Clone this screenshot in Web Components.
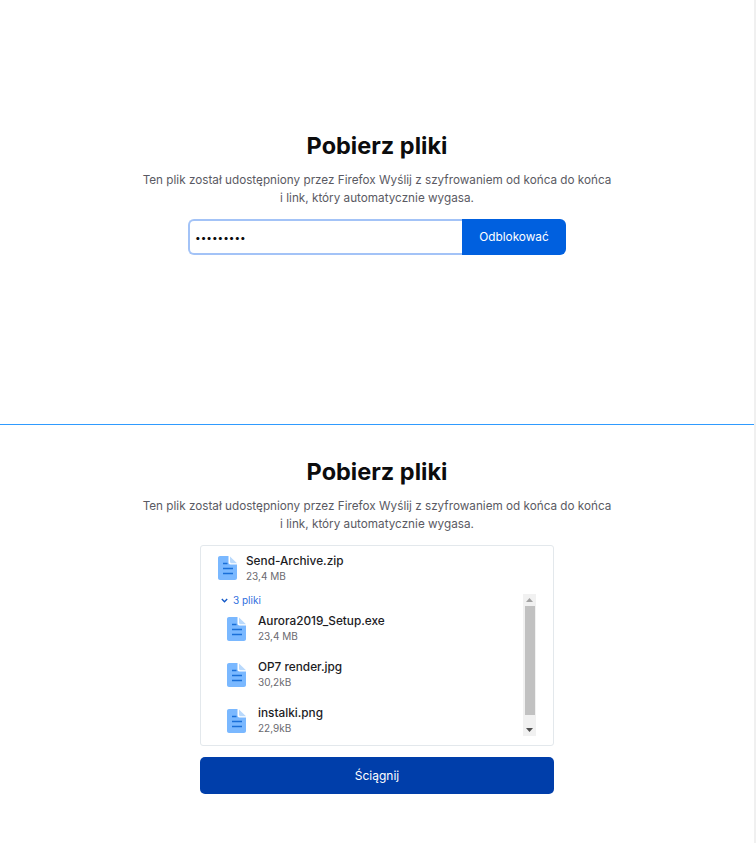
<!DOCTYPE html>
<html lang="pl">
<head>
<meta charset="utf-8">
<title>Pobierz pliki</title>
<style>
    html, body { margin: 0; background: #fff; }
    body { font-family: Inter, "Liberation Sans", sans-serif; color: #0c0c0d; }
</style>
</head>
<body>
<send-page>
    <send-panel slot="top">
        <unlock-form></unlock-form>
    </send-panel>
    <send-panel slot="bottom">
        <file-card>
            <file-row name="Send-Archive.zip" size="23,4 MB"></file-row>
            <file-toggle slot="toggle">3 pliki</file-toggle>
            <file-row slot="list" wide name="Aurora2019_Setup.exe" size="23,4 MB"></file-row>
            <file-row slot="list" wide name="OP7 render.jpg" size="30,2kB"></file-row>
            <file-row slot="list" wide name="instalki.png" size="22,9kB"></file-row>
        </file-card>
        <download-button>Ściągnij</download-button>
    </send-panel>
</send-page>

<script>
class SendPage extends HTMLElement {
    constructor() {
        super();
        this.attachShadow({ mode: "open" });
        this.shadowRoot.innerHTML = `
            <style>
                :host { display: block; box-sizing: border-box; width: 756px; height: 843px; overflow: hidden; border-right: 2px solid #f0f0f0; }
                .top { height: 425px; border-bottom: 1px solid #2f9bff; box-sizing: border-box; padding-top: 129px; }
                .bottom { padding-top: 30px; }
            </style>
            <div class="top"><slot name="top"></slot></div>
            <div class="bottom"><slot name="bottom"></slot></div>
        `;
    }
}

class SendPanel extends HTMLElement {
    constructor() {
        super();
        this.attachShadow({ mode: "open" });
        this.shadowRoot.innerHTML = `
            <style>
                :host { display: flex; flex-direction: column; align-items: center; }
                h1 { margin: 0; font-size: 23.5px; line-height: 34px; font-weight: 700; color: #0c0c0d; }
                p { margin: 8px 0 12px; font-size: 11.73px; line-height: 18px; color: #5a5a63; text-align: center; }
            </style>
            <h1>Pobierz pliki</h1>
            <p>Ten plik został udostępniony przez Firefox Wyślij z szyfrowaniem od końca do końca<br>i link, który automatycznie wygasa.</p>
            <slot></slot>
        `;
    }
}

class UnlockForm extends HTMLElement {
    constructor() {
        super();
        this.attachShadow({ mode: "open" });
        this.shadowRoot.innerHTML = `
            <style>
                :host { display: flex; width: 378px; height: 36px; }
                input { flex: 1; min-width: 0; box-sizing: border-box; height: 36px; margin: 0; padding: 0 5px; border: 2px solid #a3c3f7; border-right: 0; border-radius: 6px 0 0 6px; outline: 0; font-family: inherit; font-size: 10px; color: #0c0c0d; }
                button { width: 104px; height: 36px; border: 0; padding: 0; border-radius: 0 6px 6px 0; background: #0060df; color: #fff; font-family: inherit; font-size: 11.8px; }
            </style>
            <input type="password" value="123456789">
            <button>Odblokować</button>
        `;
    }
}

class FileCard extends HTMLElement {
    constructor() {
        super();
        this.attachShadow({ mode: "open" });
        this.shadowRoot.innerHTML = `
            <style>
                :host { display: block; box-sizing: border-box; width: 354px; height: 201px; border: 1px solid #e3e8ec; border-radius: 3px; padding: 7px 17px 0 17px; }
                .body { display: flex; margin-top: 8px; }
                .col { flex: 1; min-width: 0; }
                .list { display: flex; flex-direction: column; gap: 14px; padding: 6px 0 0 9px; }
                .sb { flex: none; width: 13px; height: 142px; margin-top: 1px; background: #f1f1f1; display: flex; flex-direction: column; align-items: center; }
                .arrow { height: 12px; flex: none; display: flex; align-items: center; justify-content: center; }
                .thumb { width: 10px; height: 109px; flex: none; background: #c1c1c1; }
                .rest { flex: 1; }
            </style>
            <slot></slot>
            <div class="body">
                <div class="col">
                    <slot name="toggle"></slot>
                    <div class="list"><slot name="list"></slot></div>
                </div>
                <div class="sb">
                    <div class="arrow"><svg width="7" height="4" viewBox="0 0 7 4"><path d="M3.5 0L7 4H0z" fill="#a3a3a3"/></svg></div>
                    <div class="thumb"></div>
                    <div class="rest"></div>
                    <div class="arrow"><svg width="7" height="4" viewBox="0 0 7 4"><path d="M0 0H7L3.5 4z" fill="#505050"/></svg></div>
                </div>
            </div>
        `;
    }
}

class FileRow extends HTMLElement {
    constructor() {
        super();
        this.attachShadow({ mode: "open" });
        this.shadowRoot.innerHTML = `
            <style>
                :host { display: flex; align-items: flex-start; gap: 9px; height: 32px; }
                :host([wide]) { gap: 12px; }
                svg { flex: none; width: 19px; height: 24px; margin-top: 3px; }
                :host([wide]) svg { margin-top: 4px; }
                .name { font-size: 11.8px; line-height: 16px; font-weight: 500; color: #1c1c1f; }
                .size { font-size: 10px; line-height: 14px; color: #6a6a70; }
            </style>
            <svg viewBox="0 0 19 24">
                <path d="M2 0H10.5V6.5C10.5 7.6 11.4 8.5 12.5 8.5H19V22C19 23.1 18.1 24 17 24H2C.9 24 0 23.1 0 22V2C0 .9 .9 0 2 0Z" fill="#7ab8ff"/>
                <path d="M12 0.5L19 7.2H13.5C12.7 7.2 12 6.5 12 5.7Z" fill="#b9d9fc"/>
                <path d="M5 7.5H9.5M5 12.5H15M5 17.5H15" stroke="#1a6fd8" stroke-width="1.4" fill="none"/>
            </svg>
            <div>
                <div class="name"></div>
                <div class="size"></div>
            </div>
        `;
    }

    connectedCallback() {
        this.shadowRoot.querySelector(".name").textContent = this.getAttribute("name");
        this.shadowRoot.querySelector(".size").textContent = this.getAttribute("size");
    }
}

class FileToggle extends HTMLElement {
    constructor() {
        super();
        this.attachShadow({ mode: "open" });
        this.shadowRoot.innerHTML = `
            <style>
                :host { display: flex; align-items: center; gap: 5px; height: 14px; padding-left: 3px; font-size: 10px; color: #2f6fde; }
                svg { width: 7px; height: 5px; }
            </style>
            <svg viewBox="0 0 7 5"><path d="M.8 1L3.5 3.8 6.2 1" fill="none" stroke="#0f56c7" stroke-width="1.3"/></svg>
            <slot></slot>
        `;
    }
}

class DownloadButton extends HTMLElement {
    constructor() {
        super();
        this.attachShadow({ mode: "open" });
        this.shadowRoot.innerHTML = `
            <style>
                :host { display: block; margin-top: 11px; }
                button { display: block; width: 354px; height: 37px; border: 0; padding: 0; border-radius: 5px; background: #003eaa; color: #fff; font-family: inherit; font-size: 12px; }
            </style>
            <button><slot></slot></button>
        `;
    }
}

customElements.define("send-page", SendPage);
customElements.define("send-panel", SendPanel);
customElements.define("unlock-form", UnlockForm);
customElements.define("file-card", FileCard);
customElements.define("file-row", FileRow);
customElements.define("file-toggle", FileToggle);
customElements.define("download-button", DownloadButton);
</script>
</body>
</html>
